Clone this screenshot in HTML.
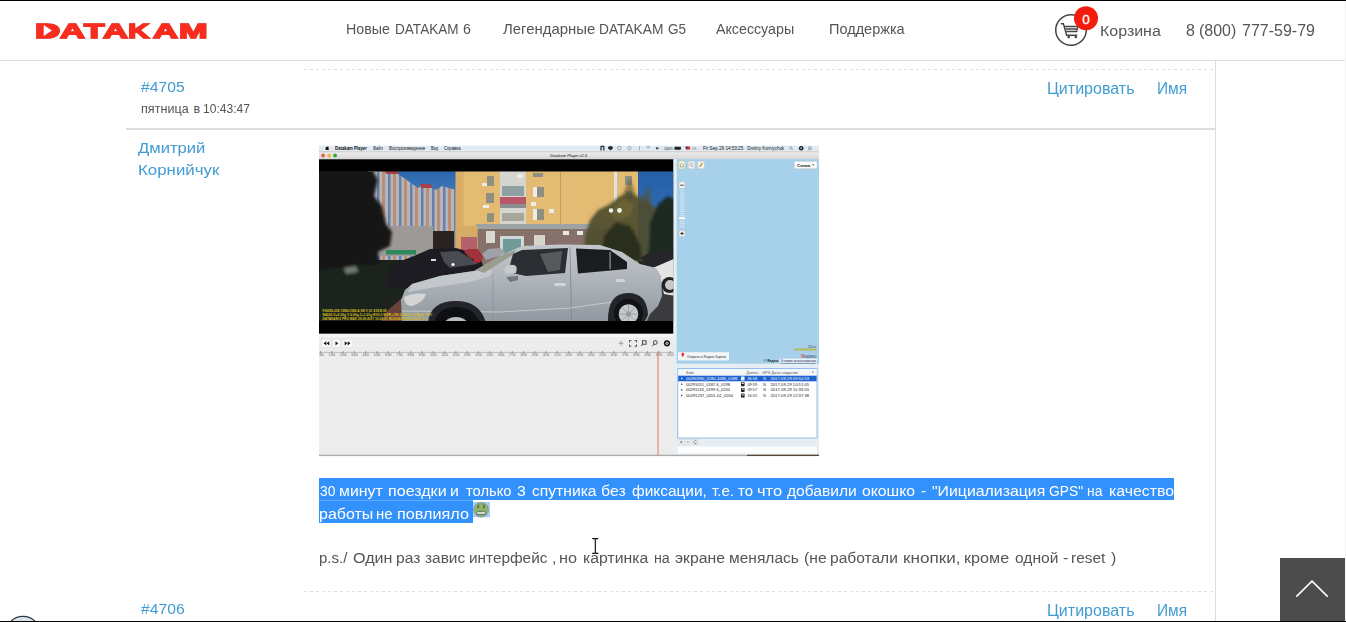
<!DOCTYPE html>
<html lang="ru">
<head>
<meta charset="utf-8">
<title>DATAKAM</title>
<style>
html,body{margin:0;padding:0;}
body{width:1346px;height:622px;overflow:hidden;background:#fff;position:relative;font-family:"Liberation Sans",sans-serif;color:#555;}
.abs{position:absolute;white-space:nowrap;}
.t{position:absolute;white-space:nowrap;line-height:1;transform-origin:0 0;}
.blue{color:#409cd3;}
.w{position:absolute;top:0;transform-origin:0 0;white-space:pre;}
.lg{position:absolute;top:20.9px;transform-origin:0 0;}
#topline{left:0;top:0;width:1346px;height:1px;background:#000;}
#botline{left:0;top:621px;width:1346px;height:1px;background:#000;}
#hdrline{left:0;top:60px;width:1345px;height:1px;background:#ddd;}
#vline{left:1215px;top:61px;width:1px;height:561px;background:#ddd;}
#sep{left:126px;top:128px;width:1090px;height:2px;background:#ddd;}
.dash{position:absolute;left:304px;width:911px;height:1px;background:repeating-linear-gradient(90deg,#ddd 0,#ddd 3px,transparent 3px,transparent 6px);}
</style>
</head>
<body>
<div class="abs" id="hdrline"></div>
<div class="abs" id="vline"></div>
<div class="abs" id="sep"></div>
<div class="dash" style="top:69px"></div>
<div class="dash" style="top:591px"></div>

<header>
<!-- logo -->
<div class="abs" id="logo" style="left:0;top:0;width:240px;height:60px;font-weight:bold;font-size:20.8px;line-height:1;color:#f92d1f;-webkit-text-stroke:1.4px #f92d1f;filter:drop-shadow(0.4px 0.6px 0.3px rgba(120,40,40,.55))">
<span class="lg" style="left:35.1px;transform:scaleX(1.683)">D</span><span class="lg" style="left:60.0px;transform:scaleX(1.657)">A</span><span class="lg" style="left:83.8px;transform:scaleX(1.608)">T</span><span class="lg" style="left:103.0px;transform:scaleX(1.66)">A</span><span class="lg" style="left:128.4px;transform:scaleX(1.417)">K</span><span class="lg" style="left:153.0px;transform:scaleX(1.66)">A</span><span class="lg" style="left:179.1px;transform:scaleX(1.645)">M</span>
<svg style="position:absolute;left:0;top:0" width="240" height="60"><path d="M42 25.5h10q3.500 1.500 3.500 5t-3.500 5h-10z" fill="#f92d1f"/><path d="M43.700 25.100L51.900 30.600L43.700 36z" fill="#fff"/></svg>
</div>
<nav>
<!-- nav -->
<div class="t" id="n1" style="left:0;top:21.7px;font-size:14.5px"><span class="w" style="left:346.4px;transform:scaleX(0.98)">Новые </span><span class="w" style="left:395.0px;transform:scaleX(0.9362)">DATAKAM </span><span class="w" style="left:463.2px;transform:scaleX(0.98)">6</span></div>
<div class="t" id="n2" style="left:0;top:21.7px;font-size:14.5px"><span class="w" style="left:502.5px;transform:scaleX(1.0278)">Легендарные </span><span class="w" style="left:598.7px;transform:scaleX(0.9469)">DATAKAM </span><span class="w" style="left:668.2px;transform:scaleX(0.9308)">G5</span></div>
<div class="t" id="n3" style="left:716.0px;top:21.7px;font-size:14.5px;transform:scaleX(0.981)">Аксессуары</div>
<div class="t" id="n4" style="left:828.5px;top:21.7px;font-size:14.5px;transform:scaleX(1.0001)">Поддержка</div>
</nav>
<!-- cart -->
<svg class="abs" style="left:1050px;top:2px" width="54" height="50" viewBox="1050 2 54 50">
<circle cx="1071" cy="30" r="15.3" fill="#fff" stroke="#444" stroke-width="1.5"/>
<path d="M1060.800 23.700h2.600l3.300 11.600h10.600" fill="none" stroke="#444" stroke-width="1.400"/>
<path d="M1064.800 26.400h13.400M1065.600 28.900h12M1066.300 31.400h10.800" fill="none" stroke="#444" stroke-width="1.500"/>
<path d="M1078 25.800l-1.300 6.200" fill="none" stroke="#444" stroke-width="1.200"/>
<circle cx="1068.700" cy="37" r="1.300" fill="#444"/><circle cx="1075.800" cy="37" r="1.300" fill="#444"/>
<circle cx="1086" cy="18.300" r="12" fill="#f31d0f"/>
<text x="1085.900" y="24.200" text-anchor="middle" font-family="Liberation Sans, sans-serif" font-size="13.500" fill="#fff" stroke="#fff" stroke-width=".3">0</text>
</svg>
<div class="t" id="cart" style="left:1100px;top:22.7px;font-size:15.5px;transform:scaleX(1.03)">Корзина</div>
<div class="t" id="phone" style="left:0;top:21.9px;font-size:16.5px"><span class="w" style="left:1186.1px;transform:scaleX(0.97)">8 </span><span class="w" style="left:1199.2px;transform:scaleX(0.966)">(800) </span><span class="w" style="left:1241.5px;transform:scaleX(0.97)">777-59-79</span></div>
</header>
<main>
<article>
<!-- post header -->
<div class="t blue" id="num1" style="left:140.5px;top:79.1px;font-size:15.5px;transform:scaleX(1.012)">#4705</div>
<div class="t" id="date1" style="left:0;top:103.0px;font-size:12.4px"><span class="w" style="left:140.5px;transform:scaleX(1.017)">пятница </span><span class="w" style="left:193.6px;transform:scaleX(1.0)">в </span><span class="w" style="left:202.9px;transform:scaleX(0.9739)">10:43:47</span></div>
<div class="t blue" id="q1" style="left:1046.5px;top:81.0px;font-size:16px;transform:scaleX(1.0012)">Цитировать</div>
<div class="t blue" id="im1" style="left:1156.5px;top:81.0px;font-size:16px;transform:scaleX(0.966)">Имя</div>

<div class="t blue" id="au1" style="left:138.0px;top:139.9px;font-size:15.5px;transform:scaleX(1.0726)">Дмитрий</div>
<div class="t blue" id="au2" style="left:137.9px;top:162.2px;font-size:15.5px;transform:scaleX(1.0878)">Корнийчук</div>

<!-- image placeholder -->
<!--SHOT--><svg class="abs" id="shot" style="left:319px;top:145px" width="500" height="312" viewBox="319 145 500 312" font-family="Liberation Sans, sans-serif">
<defs>
<linearGradient id="gsky" x1="0" y1="0" x2="0" y2="1"><stop offset="0" stop-color="#2b66ad"/><stop offset="1" stop-color="#4d86c4"/></linearGradient>
<linearGradient id="gsky2" x1="0" y1="0" x2="0" y2="1"><stop offset="0" stop-color="#2460a8"/><stop offset="1" stop-color="#3c78bb"/></linearGradient>
<linearGradient id="gcar" x1="0" y1="0" x2="0" y2="1"><stop offset="0" stop-color="#c3c8cc"/><stop offset="0.45" stop-color="#aeb4ba"/><stop offset="1" stop-color="#8f979f"/></linearGradient>
<linearGradient id="gtitle" x1="0" y1="0" x2="0" y2="1"><stop offset="0" stop-color="#efefef"/><stop offset="1" stop-color="#d6d6d6"/></linearGradient>
<pattern id="ptow" x="371" y="0" width="11" height="10" patternUnits="userSpaceOnUse"><rect width="11" height="10" fill="#aeb7c8"/><rect x="0" width="3" height="10" fill="#c18d68"/><rect x="6" width="2.5" height="10" fill="#6f7f9c"/></pattern>
<filter id="b1"><feGaussianBlur stdDeviation="0.7"/></filter>
<filter id="b2"><feGaussianBlur stdDeviation="1.6"/></filter>
<clipPath id="cphoto"><rect x="319" y="171.5" width="354.5" height="149.5"/></clipPath>
</defs>
<!-- window chrome -->
<rect x="319" y="145.800" width="500" height="310" fill="#ececec"/>
<rect x="319" y="145.800" width="500" height="5.900" fill="#e0eaf3"/>
<rect x="319" y="151.600" width="500" height="7.700" fill="url(#gtitle)"/><rect x="319" y="151.500" width="500" height=".7" fill="#bcbcbc"/>
<circle cx="323.100" cy="155.500" r="1.900" fill="#ee5b54"/><circle cx="329.200" cy="155.500" r="1.900" fill="#f0b83a"/><circle cx="335.100" cy="155.500" r="1.900" fill="#2eaa3c"/>
<!-- video -->
<rect x="319" y="159.3" width="354.5" height="174.5" fill="#000"/>
<g clip-path="url(#cphoto)">
<rect x="319" y="171.5" width="354.5" height="149.5" fill="#1d211d"/>
<g filter="url(#b1)">
<!-- left sky & towers -->
<rect x="380" y="171" width="77" height="40" fill="url(#gsky)"/>
<path d="M368 171 L368 260 L456 260 L456 190 L442 186 L436 190 L424 184 L418 188 L404 178 L398 174 L388 171 Z" fill="url(#ptow)"/>
<path d="M385 171 h12 l3 3 h-14z M420 184 h10 l3 4 h-12z" fill="#a8404a"/>
<!-- yellow building -->
<rect x="455.7" y="171" width="182.5" height="92" fill="#e4bb73"/>
<rect x="455.7" y="171" width="8" height="92" fill="#d9ad68"/>
<rect x="560" y="171" width="1" height="86" fill="#c79c5a"/>
<!-- bay windows -->
<rect x="500" y="171" width="26" height="62" fill="#d5d6d2"/>
<rect x="500" y="197" width="26" height="7" fill="#b8566a"/>
<rect x="500" y="204" width="26" height="4" fill="#8a8f92"/>
<rect x="502" y="186" width="22" height="10" fill="#8fa0a3"/>
<rect x="502" y="213" width="22" height="8" fill="#a8a59a"/>
<!-- windows -->
<g fill="#8e8f80"><rect x="533" y="173" width="10" height="4"/><rect x="533" y="187" width="11" height="10"/><rect x="533" y="209" width="11" height="11"/><rect x="487" y="176" width="7" height="10"/><rect x="486" y="193" width="8" height="10"/><rect x="487" y="213" width="7" height="9"/><rect x="625" y="176" width="7" height="9"/><rect x="626" y="191" width="6" height="8"/></g>
<g fill="#ecece6"><rect x="533" y="187" width="4" height="10"/><rect x="533" y="209" width="4" height="11"/><rect x="517" y="174" width="6" height="4"/><rect x="531" y="202" width="5" height="4"/><rect x="549" y="209" width="5" height="4"/><rect x="482" y="183" width="5" height="3"/><rect x="483" y="205" width="6" height="3"/></g>
<rect x="614" y="171" width="3" height="34" fill="#dfe3e8"/>
<!-- canopy & lower floor -->
<rect x="476" y="224" width="124" height="5" fill="#9da3a4"/>
<rect x="476" y="229" width="160" height="36" fill="#85706a"/>
<rect x="455.7" y="226" width="22" height="38" fill="#d5ab66"/>
<rect x="461" y="237" width="16" height="16" fill="#b4606a"/>
<rect x="500" y="236" width="24" height="26" fill="#cfd8d6"/><rect x="503" y="239" width="18" height="22" fill="#6f9a98"/>
<rect x="486" y="231" width="9" height="12" fill="#d8d8d0"/><rect x="534" y="235" width="11" height="12" fill="#d5d5cc"/>
<rect x="563" y="231" width="6" height="4" fill="#e8e8e4"/><rect x="577" y="231" width="6" height="4" fill="#e8e8e4"/>
<!-- right sky and trees -->
<rect x="638.2" y="171" width="36" height="90" fill="url(#gsky2)"/>
</g>
<g filter="url(#b2)">
<path d="M583 262 L585 236 L590 220 L598 210 L610 204 L620 196 L630 192 L640 198 L650 202 L658 212 L662 232 L660 262 Z" fill="#4f4c2c" opacity=".92"/><path d="M622 196 L630 178 L636 196 Z M640 200 L648 186 L652 202Z" fill="#55522f" opacity=".6"/>
<path d="M600 262 L604 236 L616 222 L630 226 L640 244 L642 262 Z" fill="#2c2e1c"/>
<path d="M648 262 L650 222 L658 204 L668 196 L676 200 L676 262 Z" fill="#1f2a22"/>
<path d="M610 212 L622 200 L634 204 L630 216 L616 220 Z" fill="#6a6336"/>
</g>
<circle cx="611" cy="210.5" r="2.2" fill="#f0f0ee"/><circle cx="619.5" cy="210.5" r="2.4" fill="#f0f0ee"/>
<!-- low building & gate -->
<g filter="url(#b1)">
<rect x="372" y="226" width="61" height="30" fill="#9d9997"/>
<rect x="433" y="231" width="21" height="22" fill="#2a2322"/>
<rect x="386" y="250" width="30" height="4.5" fill="#2f8a5c"/>
</g>
<!-- left tree -->
<g filter="url(#b2)">
<path d="M317 169 L372 169 L378 180 L374 196 L382 206 L386 224 L392 232 L390 246 L378 252 L380 268 L362 282 L340 286 L317 300 Z" fill="#141815"/>
<path d="M317 270 L400 262 L410 300 L400 323 L317 323 Z" fill="#1b201b"/>
<path d="M344 268 L356 266 L358 272 L346 274 Z" fill="#6d7a72"/>
</g>
<!-- ground -->
<path d="M388 310 L402 298 L404 323 L380 323 Z" fill="#6a3f3a" filter="url(#b1)"/>
<rect x="636" y="286" width="40" height="37" fill="#3b3b3d"/>
<!-- black car -->
<g filter="url(#b1)">
<path d="M386 286 L388 270 L398 262 L414 256 L430 249 L456 248 L470 252 L482 262 L484 270 L470 276 L440 282 L410 288 Z" fill="#1c1d22"/>
<path d="M440 252 L458 251 L470 258 L478 264 L450 268 L444 262 Z" fill="#4a4b52"/>
<rect x="431" y="259" width="5" height="2" fill="#ddd"/>
<circle cx="453" cy="264.5" r="1.6" fill="#fff"/>
<rect x="474" y="259" width="6" height="3.5" fill="#c02838"/>
<!-- red & silver far cars -->
<path d="M464 252 L468 249 L478 249 L483 256 L482 262 L470 258 Z" fill="#a0303e"/>
<path d="M482 254 L488 249 L500 248 L506 252 L500 256 L486 260 Z" fill="#9ea2a6"/>
<!-- white car right -->
<path d="M640 258 L650 252 L664 250 L676 252 L676 262 L650 268 Z" fill="#26282c"/>
<path d="M648 270 L662 264 L676 258 L676 296 L664 294 L660 278 Z" fill="#e4e4e2"/>
<circle cx="669.5" cy="285" r="8" fill="#222"/><circle cx="670" cy="285" r="5" fill="#c9c9c9"/>
</g>
<!-- main silver car -->
<path d="M402 323 L401 300 L405 290 L412 284 L440 276 L474 271 L500 256 L522 246 L560 244.5 L600 245 L622 252 L640 264 L656 268 L661 276 L662 296 L658 306 L650 314 L646 323 Z" fill="url(#gcar)"/>
<path d="M412 284 L440 276 L474 271 L492 270 L490 276 L470 282 L430 288 L408 292 Z" fill="#c9cdd0" opacity="0.8" filter="url(#b1)"/>
<path d="M476 270 L500 256 L516 250 L514 254 L484 273 Z" fill="#9a9d8e"/>
<path d="M513 254 L522 250 L568 248 L565 273 L526 276 L508 272 Z" fill="#2b2f33"/>
<path d="M540 254 L562 251 L560 270 L548 272 Z" fill="#565a5c" filter="url(#b1)"/>
<path d="M576 248.5 L610 250 L627 262 L627 269 L578 273.5 Z" fill="#1a1c20"/>
<rect x="609.5" y="252" width="1.2" height="17" fill="#8f979f"/>
<path d="M570 247 L571.5 320" stroke="#7d858d" stroke-width="0.8" fill="none"/>
<path d="M493 274 L493 323" stroke="#8a9199" stroke-width="0.7" fill="none"/>
<path d="M402 311 L500 312 L570 308 L612 302" stroke="#c9cdd1" stroke-width="0.9" fill="none"/>
<path d="M504 270 q2 -6 10 -5 q4 1 2 8 l-10 1z" fill="#c6cacd"/>
<path d="M506 277 l12 -1 l0 4 l-8 2z" fill="#70777f"/>
<rect x="554" y="283" width="12" height="3" rx="1.5" fill="#d3d6d9"/><rect x="616" y="279" width="9" height="3" rx="1.5" fill="#d3d6d9"/>
<path d="M404 297 q10 -5 22 -3 q-2 8 -14 12 q-8 0 -8 -9z" fill="#d4d6d4"/>
<!-- wheels -->
<path d="M428 323 q2 -22 28 -22 q24 0 30 22z" fill="#23252a"/>
<path d="M434 323 q4 -16 22 -16 q18 0 24 16z" fill="#0e0f11"/>
<path d="M444 323 q4 -6 12 -6 q8 0 12 6z" fill="#b9bcc0"/>
<path d="M608 323 q-1 -30 20 -30 q19 0 20 22 l-4 8z" fill="#23252a"/>
<circle cx="628.500" cy="313.500" r="14.500" fill="#111215"/><circle cx="628.500" cy="314" r="9.800" fill="#c5c8cb"/><circle cx="628.500" cy="314" r="2.500" fill="#8c9095"/><path d="M628.500 304.500v19M619.500 314h18M622 307.500l13 13M635 307.500l-13 13" stroke="#9aa0a5" stroke-width=".9"/>
<!-- osd -->
<g fill="#d9c21c" font-size="3.4" font-weight="bold">
<text x="322.5" y="312.3" textLength="64" lengthAdjust="spacingAndGlyphs">F00056-058 15Mb/1080 A HD V 01 S18 B 05</text>
<text x="322.5" y="316" textLength="110" lengthAdjust="spacingAndGlyphs">N4003  X+0.26g Y-0.03g Z+1.01g EV0.3 WDR+ON G:A05+3 33Kph 79°C</text>
<text x="322.5" y="319.7" textLength="104" lengthAdjust="spacingAndGlyphs">DATAKAM 6 PRO MAX 29.09.2017 10:06:51 N5560809 E03735607 3 0</text>
</g>
</g>

<!-- menu bar text -->
<g font-size="4.700" fill="#111">
<path d="M327.300 147.200c.5-.6 1.300-.5 1.600-.1-.7.500-.6 1.500.1 1.800-.3.800-.9 1.500-1.400 1.200-.4-.2-.6-.2-1 0-.6.300-1.500-1.400-1.100-2.300.3-.7 1.100-.9 1.800-.6zm-.1-.3c0-.5.400-.9.800-1 .1.500-.3.900-.8 1z" fill="#111"/>
<text x="335.100" y="149.900" font-weight="bold" lengthAdjust="spacingAndGlyphs" textLength="31.700">Datakam Player</text>
<text x="372.900" y="149.900" lengthAdjust="spacingAndGlyphs" textLength="9.900">Файл</text>
<text x="389" y="149.900" lengthAdjust="spacingAndGlyphs" textLength="36.100">Воспроизведение</text>
<text x="431" y="149.900" lengthAdjust="spacingAndGlyphs" textLength="7">Вид</text>
<text x="444" y="149.900" lengthAdjust="spacingAndGlyphs" textLength="16.500">Справка</text>
<text x="550.200" y="157.200" font-size="4.400" lengthAdjust="spacingAndGlyphs" textLength="36.900">Datakam Player v2.4</text>
<text x="664" y="149.900" font-size="3.600" lengthAdjust="spacingAndGlyphs" textLength="8.800">100%</text>
<text x="692.100" y="149.900" font-size="3.600" fill="#555" lengthAdjust="spacingAndGlyphs" textLength="4.900">U.S.</text>
<text x="703" y="149.900" lengthAdjust="spacingAndGlyphs" textLength="40.200">Fri Sep 29  14:53:25</text>
<text x="747.200" y="149.900" lengthAdjust="spacingAndGlyphs" textLength="36.900">Dmitriy Korniychuk</text>
</g>
<g fill="#222">
<path d="M600.400 146.500h1.200v4h-1.200zM603.200 146.500h1.200v4h-1.200zM600.400 146.300q2-1.500 4 0v1q-2-1.200-4 0z"/>
<rect x="608.200" y="146.200" width="4.400" height="3.300" rx="1.100"/><path d="M609.800 149.300l.3 1.400 1.400-1.400z"/>
<path d="M655.600 148.300l1.700-1.500v3zM657.600 147.400h.8v1.800h-.8z"/>
<rect x="674.400" y="146.800" width="6.500" height="2.900" rx=".6"/>
<circle cx="801.200" cy="148.300" r="2.300"/><circle cx="801.200" cy="148.300" r="1" fill="#8ab4e8"/>
</g>
<g fill="none" stroke="#666" stroke-width=".5">
<rect x="617.700" y="146.500" width="3.300" height="3.300" rx=".6"/><circle cx="629.400" cy="148.200" r="1.700"/>
<path d="M639.500 146.300v4M646.400 147.300q1.800-1.500 3.600 0M647.200 148.300q1-.8 2 0"/>
<circle cx="790.700" cy="147.900" r="1.300"/><path d="M791.700 148.900l1.200 1.200M808 147h3.800M808 148.300h3.800M808 149.600h3.800"/>
</g>
<rect x="685.700" y="146.600" width="4.400" height="3" fill="#c33"/><rect x="685.700" y="146.600" width="2" height="1.600" fill="#336"/>

<!-- right panel -->
<rect x="673.5" y="159.3" width="145.500" height="297" fill="#e6edf3"/>
<rect x="676.700" y="159" width="142.300" height="204.700" fill="#a7d0ea"/>
<!-- map tools -->
<g stroke="#bdbdbd" stroke-width=".4">
<rect x="679" y="161.200" width="5.800" height="7.600" rx="1" fill="#fdf6d8" stroke="#d8c27a"/>
<rect x="688.300" y="161.200" width="6.600" height="7.600" rx="1" fill="#f4f4f4"/>
<rect x="697.700" y="161.200" width="6.600" height="7.600" rx="1" fill="#f4f4f4"/>
<rect x="794.300" y="161.300" width="22.700" height="7.400" rx="1" fill="#fcfcfc"/>
</g>
<path d="M680.300 167v-2.500q1.500-2 3 0v2.500z" fill="none" stroke="#777" stroke-width=".6"/>
<circle cx="691.200" cy="164.600" r="1.500" fill="none" stroke="#888" stroke-width=".6"/><path d="M692.300 165.800l1.400 1.600" stroke="#888" stroke-width=".6"/>
<path d="M699.500 167l3-4" stroke="#c9962f" stroke-width="1.300"/>
<text x="797" y="166.600" font-size="4" font-weight="bold" fill="#222" lengthAdjust="spacingAndGlyphs" textLength="13">Схема</text>
<path d="M812.300 164.300l1 1.400 1-1.400z" fill="#333"/>
<!-- zoom slider -->
<rect x="679" y="181.800" width="6" height="6.600" rx="1" fill="#f2f2f2" stroke="#aaa" stroke-width=".4"/><rect x="680.300" y="184.700" width="3.400" height=".9" fill="#333"/>
<g stroke="#e6eef5" stroke-width=".7"><path d="M680 190.500h4.500M680 192.400h4.500M680 194.300h4.500M680 196.200h4.500M680 198.100h4.500M680 200h4.500M680 201.900h4.500M680 203.800h4.500M680 205.700h4.500M680 207.600h4.500M680 209.500h4.500M680 211.400h4.500M680 213.300h4.500M680 215.200h4.500M680 221.500h4.500M680 223.400h4.500M680 225.300h4.500M680 227.200h4.500"/></g>
<rect x="678.800" y="216.800" width="6.600" height="2.800" rx=".8" fill="#fafafa" stroke="#bbb" stroke-width=".3"/>
<rect x="679" y="230.200" width="6" height="6.600" rx="1" fill="#f2f2f2" stroke="#aaa" stroke-width=".4"/><path d="M680.300 233.500h3.400M682 231.800v3.400" stroke="#222" stroke-width=".9"/>
<!-- map bottom -->
<rect x="678" y="352.200" width="51" height="8.200" fill="#f3f6f8"/>
<path d="M681.400 354.200a1.400 1.400 0 1 1 2.800 0c0 1.200-1.400 2.800-1.400 2.800s-1.400-1.600-1.400-2.800z" fill="#e33"/>
<text x="687" y="358" font-size="3.600" fill="#222" lengthAdjust="spacingAndGlyphs" textLength="39">Открыть в Яндекс.Картах</text>
<rect x="794" y="348.500" width="22.500" height="2" fill="#b7b95a"/>
<text x="808" y="348" font-size="2.800" fill="#444">250 м</text>
<text x="801" y="357.500" font-size="5" fill="#4d4d6d" lengthAdjust="spacingAndGlyphs" textLength="15.500"><tspan fill="#e22">Я</tspan>ндекс</text>
<rect x="779.500" y="358.600" width="37.500" height="4" fill="#eef3f7"/>
<text x="764" y="362" font-size="3.200" font-weight="bold" fill="#222">© Яндекс</text>
<text x="780.500" y="362" font-size="3.200" fill="#225" lengthAdjust="spacingAndGlyphs" textLength="35.500" text-decoration="underline">Условия использования</text>
<!-- file list -->
<rect x="677.800" y="368.600" width="139.200" height="69.400" fill="#fff" stroke="#7fb0e6" stroke-width=".8"/>
<rect x="678.200" y="369" width="138.400" height="6.600" fill="#f4f6f8"/>
<rect x="678.200" y="375.700" width="138.400" height="5.600" fill="#1d62cf"/>
<g font-size="3.500" fill="#222">
<text x="686" y="373.800" fill="#555" lengthAdjust="spacingAndGlyphs" textLength="8">Файл</text>
<text x="746.500" y="373.800" fill="#555" lengthAdjust="spacingAndGlyphs" textLength="14">Длител...</text>
<text x="762" y="373.800" fill="#555" lengthAdjust="spacingAndGlyphs" textLength="36">GPS Дата создания</text>
<path d="M811.800 371.800l1 1.200 1-1.200z" fill="#555"/>
<text x="686" y="380" fill="#fff" lengthAdjust="spacingAndGlyphs" textLength="51.500">00290930_0180-1086_0186</text><text x="747.500" y="380" fill="#fff" lengthAdjust="spacingAndGlyphs" textLength="9.500">30:58</text><text x="763.300" y="380" fill="#fff">N</text><text x="770.500" y="380" fill="#fff" lengthAdjust="spacingAndGlyphs" textLength="38.500">2017-09-29 09:50:53</text>
<text x="686" y="385.600" lengthAdjust="spacingAndGlyphs" textLength="44">00291051_0187-6_0198</text><text x="747.500" y="385.600" lengthAdjust="spacingAndGlyphs" textLength="9.500">09:59</text><text x="763.300" y="385.600">N</text><text x="770.500" y="385.600" lengthAdjust="spacingAndGlyphs" textLength="38.500">2017-09-29 10:51:05</text>
<text x="686" y="391.300" lengthAdjust="spacingAndGlyphs" textLength="44">00291133_0199-6_0200</text><text x="747.500" y="391.300" lengthAdjust="spacingAndGlyphs" textLength="9.500">09:57</text><text x="763.300" y="391.300">N</text><text x="770.500" y="391.300" lengthAdjust="spacingAndGlyphs" textLength="38.500">2017-09-29 11:33:20</text>
<text x="686" y="397" lengthAdjust="spacingAndGlyphs" textLength="47">00291237_0201-02_0204</text><text x="747.500" y="397" lengthAdjust="spacingAndGlyphs" textLength="9.500">16:55</text><text x="763.300" y="397">N</text><text x="770.500" y="397" lengthAdjust="spacingAndGlyphs" textLength="38.500">2017-09-29 12:37:38</text>
</g>
<g fill="#222"><path d="M681.300 383.200l1.600 1-1.600 1zM681.300 388.900l1.600 1-1.600 1zM681.300 394.600l1.600 1-1.600 1z"/><path d="M681.300 377.500l1.600 1-1.600 1z" fill="#fff"/>
<rect x="741" y="382.200" width="3.600" height="4" rx=".4"/><rect x="741" y="387.900" width="3.600" height="4" rx=".4"/><rect x="741" y="393.600" width="3.600" height="4" rx=".4"/><rect x="741" y="376.500" width="3.600" height="4" rx=".4" fill="#e8eefc"/></g>
<g fill="#fff"><rect x="741.800" y="382.900" width="2" height="1"/><rect x="741.800" y="388.600" width="2" height="1"/><rect x="741.800" y="394.300" width="2" height="1"/></g>
<!-- list buttons -->
<g fill="#f1f3f5" stroke="#c4c9ce" stroke-width=".4"><rect x="678.300" y="439.300" width="6" height="5.400"/><rect x="685" y="439.300" width="6" height="5.400"/><rect x="692.300" y="439.300" width="6" height="5.400"/></g>
<path d="M680 442h2.600M681.300 440.700v2.600M686.700 442h2.600" stroke="#555" stroke-width=".6"/>
<path d="M696.700 441.200a1.500 1.500 0 1 0 .2 1.400" fill="none" stroke="#444" stroke-width=".6"/>
<rect x="677.800" y="446.500" width="139.200" height="7" fill="#fdfdfd"/>

<!-- controls & timeline -->
<rect x="319" y="333.800" width="354.500" height="3.200" fill="#f6f6f6"/>
<rect x="319" y="337" width="354.500" height="118" fill="#ececec"/>
<g fill="#fbfbfb" stroke="#d6d6d6" stroke-width=".4"><rect x="321.700" y="339.400" width="9.300" height="7.800"/><rect x="332.700" y="339.400" width="7.600" height="7.800"/><rect x="342.300" y="339.400" width="10.300" height="7.800"/></g>
<g fill="#111"><path d="M326.300 341.200v4.200l-2.700-2.100zM329.300 341.200v4.200l-2.700-2.100zM335.500 341.200v4.200l2.700-2.100zM344.700 341.200v4.200l2.700-2.100zM347.700 341.200v4.200l2.700-2.100z"/></g>
<g fill="none" stroke="#222" stroke-width=".8">
<path d="M618.500 343.300h5M621 340.800v5" stroke="#777" stroke-width=".6"/>
<path d="M629.500 342.300v-1.800h1.800M634.700 340.500h1.800v1.800M636.500 344.500v1.800h-1.800M631.300 346.300h-1.800v-1.800"/>
<rect x="642.500" y="340.800" width="3.600" height="3.400"/><path d="M642.500 344.200l-1.200 1.800"/>
<circle cx="655.300" cy="342.500" r="1.900"/><path d="M654 344l-1.500 2.200"/>
</g>
<circle cx="667" cy="343.300" r="3.100" fill="#111"/><circle cx="667" cy="343.300" r="1.500" fill="#ececec"/><circle cx="667" cy="343.300" r=".7" fill="#111"/>
<path d="M319 352.400h354.500" stroke="#9a9a9a" stroke-width=".6"/>
<g id="ticks" stroke="#555" stroke-width=".5"><path d="M320.5 351v2.600"/><path d="M331.8 351v2.600"/><path d="M343.1 351v2.600"/><path d="M354.3 351v2.600"/><path d="M365.6 351v2.600"/><path d="M376.9 351v2.600"/><path d="M388.2 351v2.600"/><path d="M399.5 351v2.600"/><path d="M410.7 351v2.600"/><path d="M422.0 351v2.600"/><path d="M433.3 351v2.600"/><path d="M444.6 351v2.600"/><path d="M455.9 351v2.600"/><path d="M467.1 351v2.600"/><path d="M478.4 351v2.600"/><path d="M489.7 351v2.600"/><path d="M501.0 351v2.600"/><path d="M512.3 351v2.600"/><path d="M523.5 351v2.600"/><path d="M534.8 351v2.600"/><path d="M546.1 351v2.600"/><path d="M557.4 351v2.600"/><path d="M568.7 351v2.600"/><path d="M579.9 351v2.600"/><path d="M591.2 351v2.600"/><path d="M602.5 351v2.600"/><path d="M613.8 351v2.600"/><path d="M625.1 351v2.600"/><path d="M636.3 351v2.600"/><path d="M647.6 351v2.600"/><path d="M658.9 351v2.600"/><path d="M670.2 351v2.600"/></g>
<g font-size="2.600" fill="#555"><text x="317.3" y="356.300" lengthAdjust="spacingAndGlyphs" textLength="6.400">0:00</text><text x="328.6" y="356.300" lengthAdjust="spacingAndGlyphs" textLength="6.400">1:00</text><text x="339.9" y="356.300" lengthAdjust="spacingAndGlyphs" textLength="6.400">2:00</text><text x="351.1" y="356.300" lengthAdjust="spacingAndGlyphs" textLength="6.400">3:00</text><text x="362.4" y="356.300" lengthAdjust="spacingAndGlyphs" textLength="6.400">4:00</text><text x="373.7" y="356.300" lengthAdjust="spacingAndGlyphs" textLength="6.400">5:00</text><text x="385.0" y="356.300" lengthAdjust="spacingAndGlyphs" textLength="6.400">6:00</text><text x="396.3" y="356.300" lengthAdjust="spacingAndGlyphs" textLength="6.400">7:00</text><text x="407.5" y="356.300" lengthAdjust="spacingAndGlyphs" textLength="6.400">8:00</text><text x="418.8" y="356.300" lengthAdjust="spacingAndGlyphs" textLength="6.400">9:00</text><text x="430.1" y="356.300" lengthAdjust="spacingAndGlyphs" textLength="6.400">10:00</text><text x="441.4" y="356.300" lengthAdjust="spacingAndGlyphs" textLength="6.400">11:00</text><text x="452.7" y="356.300" lengthAdjust="spacingAndGlyphs" textLength="6.400">12:00</text><text x="463.9" y="356.300" lengthAdjust="spacingAndGlyphs" textLength="6.400">13:00</text><text x="475.2" y="356.300" lengthAdjust="spacingAndGlyphs" textLength="6.400">14:00</text><text x="486.5" y="356.300" lengthAdjust="spacingAndGlyphs" textLength="6.400">15:00</text><text x="497.8" y="356.300" lengthAdjust="spacingAndGlyphs" textLength="6.400">16:00</text><text x="509.1" y="356.300" lengthAdjust="spacingAndGlyphs" textLength="6.400">17:00</text><text x="520.3" y="356.300" lengthAdjust="spacingAndGlyphs" textLength="6.400">18:00</text><text x="531.6" y="356.300" lengthAdjust="spacingAndGlyphs" textLength="6.400">19:00</text><text x="542.9" y="356.300" lengthAdjust="spacingAndGlyphs" textLength="6.400">20:00</text><text x="554.2" y="356.300" lengthAdjust="spacingAndGlyphs" textLength="6.400">21:00</text><text x="565.5" y="356.300" lengthAdjust="spacingAndGlyphs" textLength="6.400">22:00</text><text x="576.7" y="356.300" lengthAdjust="spacingAndGlyphs" textLength="6.400">23:00</text><text x="588.0" y="356.300" lengthAdjust="spacingAndGlyphs" textLength="6.400">24:00</text><text x="599.3" y="356.300" lengthAdjust="spacingAndGlyphs" textLength="6.400">25:00</text><text x="610.6" y="356.300" lengthAdjust="spacingAndGlyphs" textLength="6.400">26:00</text><text x="621.9" y="356.300" lengthAdjust="spacingAndGlyphs" textLength="6.400">27:00</text><text x="633.1" y="356.300" lengthAdjust="spacingAndGlyphs" textLength="6.400">28:00</text><text x="644.4" y="356.300" lengthAdjust="spacingAndGlyphs" textLength="6.400">29:00</text><text x="655.7" y="356.300" lengthAdjust="spacingAndGlyphs" textLength="6.400">30:00</text><text x="667.0" y="356.300" lengthAdjust="spacingAndGlyphs" textLength="6.400">31:00</text></g>
<rect x="657.600" y="351.500" width=".9" height="104" fill="#e06a5a"/>
<!-- bottom edge -->
<rect x="319" y="454.800" width="500" height="1.100" fill="#8f8f8f"/>
<rect x="319" y="455.700" width="500" height=".8" fill="#d8d8d8"/>
<rect x="747" y="454.800" width="72" height="1.100" fill="#4a3a28"/>
<rect x="319" y="456.400" width="500" height="1" fill="#fff"/>
</svg>
<!--/SHOT-->

<!-- selected text -->
<div class="abs" style="left:319px;top:478.400px;width:855px;height:21.400px;background:#3391fb"></div>
<div class="abs" style="left:319px;top:500.600px;width:154px;height:22.100px;background:#3391fb"></div>
<div class="abs" style="left:319px;top:499.800px;width:154px;height:.8px;background:#5aabff"></div>
<div class="t" id="s1" style="left:0;top:483.1px;font-size:15.2px;color:#fff"><span class="w" style="left:319.7px;transform:scaleX(0.9101)">30 </span><span class="w" style="left:339.2px;transform:scaleX(1.0442)">минут </span><span class="w" style="left:387.7px;transform:scaleX(1.0581)">поездки </span><span class="w" style="left:449.7px;transform:scaleX(1.04)">и </span><span class="w" style="left:466.1px;transform:scaleX(0.9708)">только </span><span class="w" style="left:516.5px;transform:scaleX(1.04)">3 </span><span class="w" style="left:531.9px;transform:scaleX(1.0301)">спутника </span><span class="w" style="left:600.9px;transform:scaleX(1.049)">без </span><span class="w" style="left:631.9px;transform:scaleX(1.016)">фиксации, </span><span class="w" style="left:711.7px;transform:scaleX(0.9955)">т.е. </span><span class="w" style="left:738.0px;transform:scaleX(0.9887)">то </span><span class="w" style="left:756.9px;transform:scaleX(1.0853)">что </span><span class="w" style="left:787.0px;transform:scaleX(1.0259)">добавили </span><span class="w" style="left:861.5px;transform:scaleX(1.0372)">окошко </span><span class="w" style="left:921.0px;transform:scaleX(1.04)">- </span><span class="w" style="left:931.6px;transform:scaleX(1.0428)">"Иициализация </span><span class="w" style="left:1049.3px;transform:scaleX(0.9101)">GPS" </span><span class="w" style="left:1086.5px;transform:scaleX(0.9121)">на </span><span class="w" style="left:1109.3px;transform:scaleX(1.0428)">качество</span></div>
<div class="t" id="s2" style="left:0;top:505.8px;font-size:15.2px;color:#fff"><span class="w" style="left:319.3px;transform:scaleX(1.0531)">работы </span><span class="w" style="left:375.9px;transform:scaleX(0.9815)">не </span><span class="w" style="left:397.3px;transform:scaleX(1.0666)">повлияло</span></div>
<div class="t" id="ps" style="left:0;top:550.4px;font-size:15.2px"><span class="w" style="left:319.3px;transform:scaleX(0.9895)">p.s./ </span><span class="w" style="left:353.3px;transform:scaleX(1.0619)">Один </span><span class="w" style="left:396.2px;transform:scaleX(1.0269)">раз </span><span class="w" style="left:424.5px;transform:scaleX(1.0163)">завис </span><span class="w" style="left:469.3px;transform:scaleX(1.0109)">интерфейс </span><span class="w" style="left:551.8px;transform:scaleX(1.04)">, </span><span class="w" style="left:559.0px;transform:scaleX(1.0738)">но </span><span class="w" style="left:582.7px;transform:scaleX(1.04)">картинка </span><span class="w" style="left:653.7px;transform:scaleX(0.9352)">на </span><span class="w" style="left:674.9px;transform:scaleX(1.0404)">экране </span><span class="w" style="left:728.9px;transform:scaleX(1.0233)">менялась </span><span class="w" style="left:803.6px;transform:scaleX(1.0332)">(не </span><span class="w" style="left:830.0px;transform:scaleX(1.023)">работали </span><span class="w" style="left:902.7px;transform:scaleX(1.1281)">кнопки, </span><span class="w" style="left:964.2px;transform:scaleX(1.0636)">кроме </span><span class="w" style="left:1014.8px;transform:scaleX(1.025)">одной </span><span class="w" style="left:1063.2px;transform:scaleX(1.04)">- </span><span class="w" style="left:1071.4px;transform:scaleX(1.0164)">reset </span><span class="w" style="left:1110.5px;transform:scaleX(1.04)">)</span></div>

</article>
<article>
<div class="t blue" id="num2" style="left:140.5px;top:601.2px;font-size:15.5px;transform:scaleX(1.012)">#4706</div>
<div class="t blue" id="q2" style="left:1046.5px;top:603.1px;font-size:16px;transform:scaleX(1.0012)">Цитировать</div>
<div class="t blue" id="im2" style="left:1156.5px;top:603.1px;font-size:16px;transform:scaleX(0.966)">Имя</div>

</article>
</main>
<!-- emoji + cursor -->
<svg class="abs" style="left:470px;top:498px" width="24" height="26" viewBox="470 498 24 26">
<rect x="473" y="502" width="17" height="15.300" fill="#a9cdf6"/>
<circle cx="481.100" cy="509.700" r="7.300" fill="#8eb46c" stroke="#8a9c9e" stroke-width="1"/>
<ellipse cx="478.300" cy="506.800" rx=".8" ry="1.500" fill="#3c5a3c"/><ellipse cx="483.900" cy="506.800" rx=".8" ry="1.500" fill="#3c5a3c"/>
<path d="M477 505.200q1.300-1.300 2.600-.6M485.200 505.200q-1.300-1.300-2.600-.6" fill="none" stroke="#5d7d55" stroke-width=".6"/>
<rect x="476.800" y="511.300" width="8.600" height="3.300" rx="1" fill="#cfdccf" stroke="#4e6e4e" stroke-width=".9"/>
</svg>
<svg class="abs" style="left:588px;top:536px" width="14" height="20" viewBox="588 536 14 20">
<path d="M592.300 538.600h2.200l.8.700.8-.7h2.200M592.300 553.400h2.200l.8-.7.800.7h2.200M595.300 539.300v13.400" fill="none" stroke="#fff" stroke-width="2.600"/>
<path d="M592.300 538.600h2.200l.8.700.8-.7h2.200M592.300 553.400h2.200l.8-.7.800.7h2.200M595.300 539.300v13.400" fill="none" stroke="#000" stroke-width="1.100"/>
</svg>
<!-- bottom-left bubble -->
<svg class="abs" style="left:5px;top:612px" width="40" height="10" viewBox="5 612 40 10">
<circle cx="23" cy="634" r="17.600" fill="#dbe4ea" stroke="#2c3a46" stroke-width="1.200"/>
</svg>
<!-- scroll top -->
<div class="abs" style="left:1280px;top:558px;width:65px;height:64px;background:#4c4c4c"></div>
<svg class="abs" style="left:1280px;top:558px" width="65" height="64"><path d="M16.300 38.600 L32 23.100 L47.700 38.600" fill="none" stroke="#fff" stroke-width="1.500"/></svg>

<div class="abs" style="left:1345px;top:1px;width:1px;height:620px;background:#f4f4f4"></div>
<div class="abs" id="topline"></div>
<div class="abs" id="botline"></div>
</body>
</html>
